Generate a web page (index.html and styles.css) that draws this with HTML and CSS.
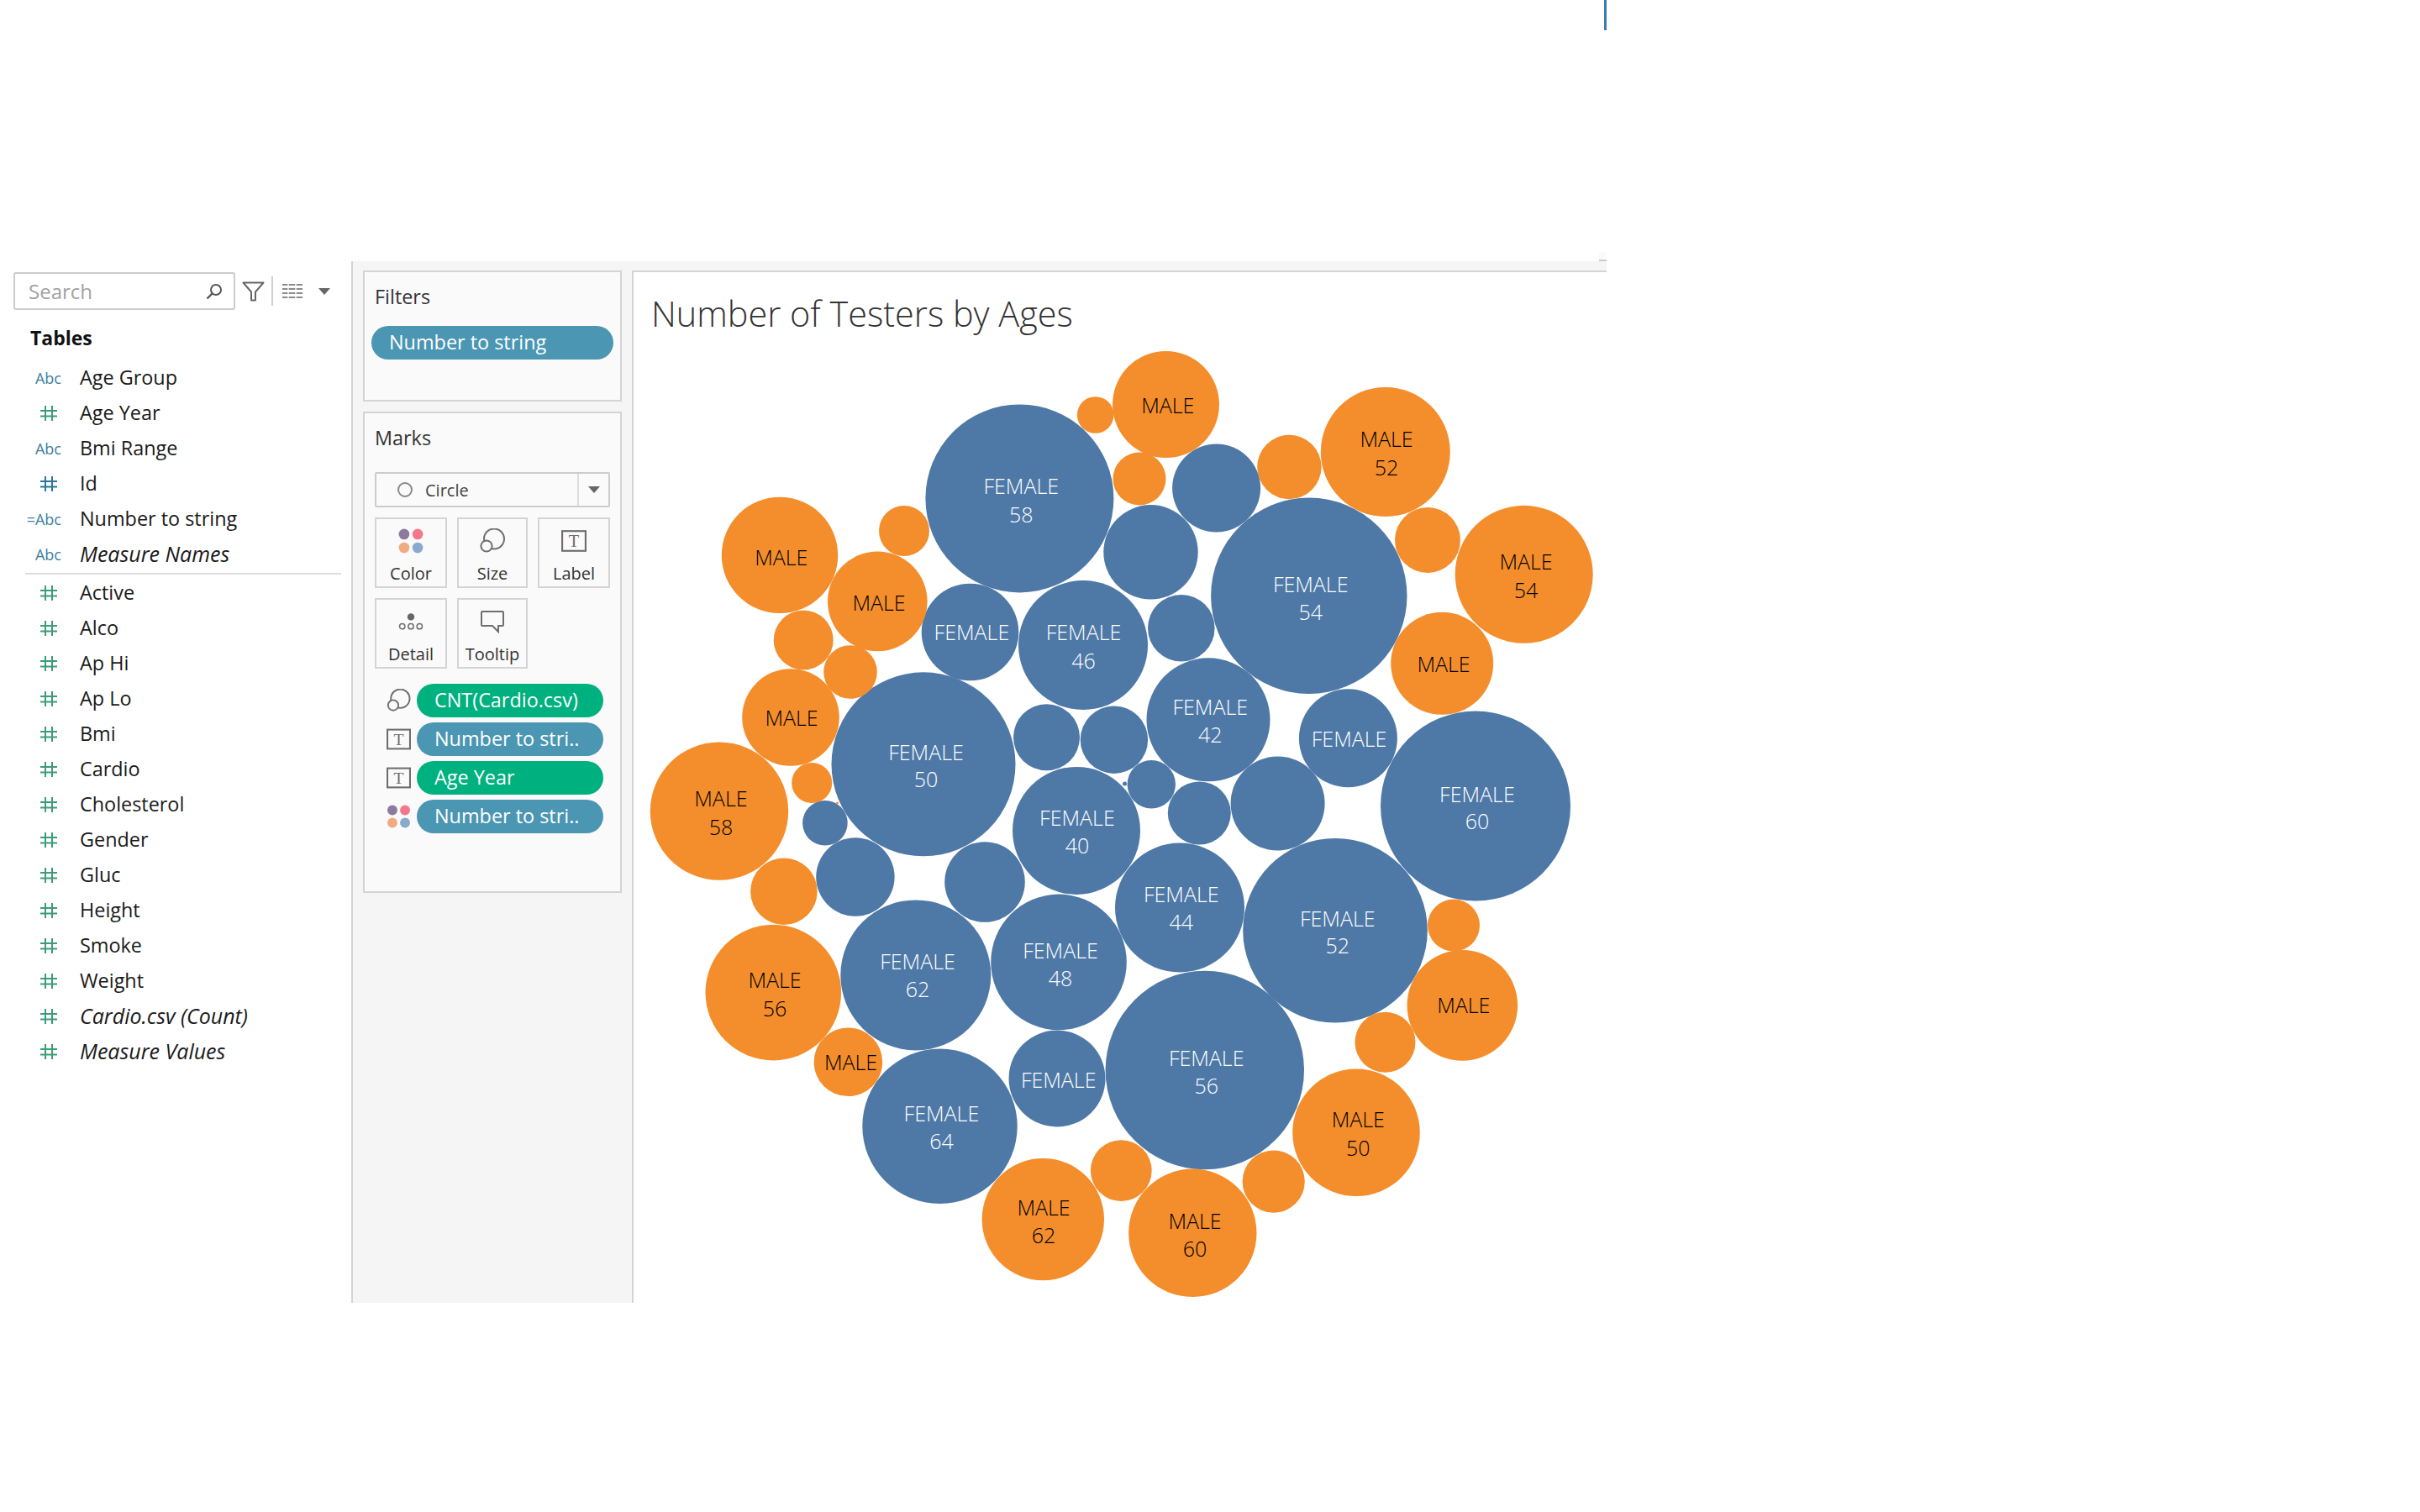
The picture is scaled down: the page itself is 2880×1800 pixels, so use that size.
FILE: index.html
```html
<!DOCTYPE html>
<html lang="en">
<head>
  <meta charset="UTF-8">
  <title>Number of Testers by Ages</title>
  <link rel="stylesheet" href="styles.css">
</head>
<body>
  <svg class="defs" aria-hidden="true">
    <symbol id="hash" viewBox="0 0 20 18">
      <path d="M6 0v18M14 0v18M0 6h20M0 12.5h20" fill="none" stroke="currentColor" stroke-width="2"/>
    </symbol>
    <symbol id="sizes" viewBox="0 0 30 30">
      <circle cx="17" cy="12.5" r="12" fill="none" stroke="#6e6e6e" stroke-width="2"/>
      <circle cx="8" cy="21" r="6.6" fill="#fafafa" stroke="#6e6e6e" stroke-width="2"/>
    </symbol>
    <symbol id="textbox" viewBox="0 0 28 24">
      <rect x="1" y="1" width="26" height="22" fill="none" stroke="#6e6e6e" stroke-width="2"/>
      <text x="14" y="18.5" class="serif-t">T</text>
    </symbol>
    <symbol id="dots" viewBox="0 0 26 26">
      <circle cx="6" cy="6" r="5.5" fill="#8c7aa0"/>
      <circle cx="20" cy="6" r="5.5" fill="#f5788a"/>
      <circle cx="6" cy="20" r="5.5" fill="#f1ab83"/>
      <circle cx="20" cy="20" r="5.5" fill="#88aacf"/>
    </symbol>
  </svg>

  <div class="tick"></div>

  <div class="workspace">
    <aside class="data-pane">
      <div class="search-row">
        <div class="search">
          <span>Search</span>
          <svg class="glass" viewBox="0 0 20 20"><circle cx="12" cy="8" r="6" fill="none" stroke="#555" stroke-width="2"/><path d="M7.5 12.5 1.5 18.5" stroke="#555" stroke-width="2.4"/></svg>
        </div>
        <svg class="funnel" viewBox="0 0 27 24"><path d="M1.5 1.5H25.5L16 12.5V22.5H11V12.5Z" fill="none" stroke="#666" stroke-width="2" stroke-linejoin="round"/></svg>
        <div class="sep"></div>
        <svg class="list-icon" viewBox="0 0 24 18"><path d="M0 1h24M0 6h24M0 11h24M0 16h24" stroke="#666" stroke-width="1.6" fill="none"/><path d="M7 0v18M16 0v18" stroke="#fff" stroke-width="1.4"/></svg>
        <div class="caret"></div>
      </div>
      <h3 class="tables">Tables</h3>

      <div class="field"><span class="type">Abc</span><span>Age Group</span></div>
      <div class="field"><svg class="hash green"><use href="#hash"/></svg><span>Age Year</span></div>
      <div class="field"><span class="type">Abc</span><span>Bmi Range</span></div>
      <div class="field"><svg class="hash blue"><use href="#hash"/></svg><span>Id</span></div>
      <div class="field"><span class="type calc">=Abc</span><span>Number to string</span></div>
      <div class="field"><span class="type">Abc</span><em>Measure Names</em></div>
      <div class="divider"></div>
      <div class="field"><svg class="hash green"><use href="#hash"/></svg><span>Active</span></div>
      <div class="field"><svg class="hash green"><use href="#hash"/></svg><span>Alco</span></div>
      <div class="field"><svg class="hash green"><use href="#hash"/></svg><span>Ap Hi</span></div>
      <div class="field"><svg class="hash green"><use href="#hash"/></svg><span>Ap Lo</span></div>
      <div class="field"><svg class="hash green"><use href="#hash"/></svg><span>Bmi</span></div>
      <div class="field"><svg class="hash green"><use href="#hash"/></svg><span>Cardio</span></div>
      <div class="field"><svg class="hash green"><use href="#hash"/></svg><span>Cholesterol</span></div>
      <div class="field"><svg class="hash green"><use href="#hash"/></svg><span>Gender</span></div>
      <div class="field"><svg class="hash green"><use href="#hash"/></svg><span>Gluc</span></div>
      <div class="field"><svg class="hash green"><use href="#hash"/></svg><span>Height</span></div>
      <div class="field"><svg class="hash green"><use href="#hash"/></svg><span>Smoke</span></div>
      <div class="field"><svg class="hash green"><use href="#hash"/></svg><span>Weight</span></div>
      <div class="field"><svg class="hash green"><use href="#hash"/></svg><em>Cardio.csv (Count)</em></div>
      <div class="field"><svg class="hash green"><use href="#hash"/></svg><em>Measure Values</em></div>
    </aside>

    <section class="shelves">
      <div class="card filters">
        <div class="card-title">Filters</div>
        <div class="pill pill-blue filter-pill">Number to string</div>
      </div>

      <div class="card marks">
        <div class="card-title">Marks</div>
        <div class="mark-select">
          <div class="mark-type"><span class="ring"></span>Circle</div>
          <div class="mark-arrow"><div class="caret"></div></div>
        </div>
        <div class="mark-buttons">
          <div class="mark-btn"><svg class="btn-icon"><use href="#dots"/></svg><span>Color</span></div>
          <div class="mark-btn"><svg class="btn-icon"><use href="#sizes"/></svg><span>Size</span></div>
          <div class="mark-btn"><svg class="btn-icon"><use href="#textbox"/></svg><span>Label</span></div>
          <div class="mark-btn">
            <svg class="btn-icon" viewBox="0 0 32 26"><circle cx="16" cy="7" r="4.5" fill="#666"/><circle cx="5" cy="19" r="3.4" fill="none" stroke="#6e6e6e" stroke-width="1.6"/><circle cx="16" cy="19" r="3.4" fill="none" stroke="#6e6e6e" stroke-width="1.6"/><circle cx="27" cy="19" r="3.4" fill="none" stroke="#6e6e6e" stroke-width="1.6"/></svg>
            <span>Detail</span>
          </div>
          <div class="mark-btn">
            <svg class="btn-icon" viewBox="0 0 30 28"><path d="M3 2H27a1 1 0 0 1 1 1V18a1 1 0 0 1-1 1H22V26L15 19H3a1 1 0 0 1-1-1V3a1 1 0 0 1 1-1Z" fill="none" stroke="#6e6e6e" stroke-width="2"/></svg>
            <span>Tooltip</span>
          </div>
        </div>
        <div class="mark-fields">
          <div class="mark-field"><svg class="field-icon"><use href="#sizes"/></svg><div class="pill pill-green">CNT(Cardio.csv)</div></div>
          <div class="mark-field"><svg class="field-icon"><use href="#textbox"/></svg><div class="pill pill-blue">Number to stri..</div></div>
          <div class="mark-field"><svg class="field-icon"><use href="#textbox"/></svg><div class="pill pill-green">Age Year</div></div>
          <div class="mark-field"><svg class="field-icon"><use href="#dots"/></svg><div class="pill pill-blue">Number to stri..</div></div>
        </div>
      </div>
    </section>

    <main class="view-wrap">
      <div class="corner"></div>
      <div class="view">
        <h1 class="view-title">Number of Testers by Ages</h1>
        <!-- bubbles: coordinates are page pixels, see viewBox -->
        <svg class="bubbles" viewBox="754 400 1158 1151">
          <g class="f">
            <circle cx="1213.4" cy="593.4" r="112"/>
            <circle cx="1447.6" cy="581" r="52.5"/>
            <circle cx="1369.5" cy="657.3" r="56.2"/>
            <circle cx="1557.8" cy="709.2" r="116.7"/>
            <circle cx="1154.5" cy="752.5" r="57.8"/>
            <circle cx="1289" cy="768" r="77"/>
            <circle cx="1405.8" cy="747.7" r="39.8"/>
            <circle cx="1099" cy="909.8" r="109.5"/>
            <circle cx="1245.5" cy="877.8" r="39.5"/>
            <circle cx="1325.9" cy="880.7" r="40.2"/>
            <circle cx="1438" cy="856.8" r="73.5"/>
            <circle cx="1604.4" cy="878.8" r="58.5"/>
            <circle cx="1756" cy="959.5" r="113"/>
            <circle cx="981.9" cy="979.7" r="26.8"/>
            <circle cx="1370.3" cy="933.8" r="28.7"/>
            <circle cx="1338.5" cy="933" r="2.5"/>
            <circle cx="1427.3" cy="968" r="37.5"/>
            <circle cx="1520.6" cy="956.5" r="56"/>
            <circle cx="1281" cy="988.9" r="76"/>
            <circle cx="1017.9" cy="1044" r="46.7"/>
            <circle cx="1172" cy="1050" r="47.8"/>
            <circle cx="1404" cy="1080.6" r="77"/>
            <circle cx="1589" cy="1107.7" r="109.8"/>
            <circle cx="1089.8" cy="1160.9" r="89.5"/>
            <circle cx="1260" cy="1145.4" r="80.8"/>
            <circle cx="1118.5" cy="1340.8" r="92.2"/>
            <circle cx="1258" cy="1284" r="57.5"/>
            <circle cx="1433.8" cy="1274" r="118.2"/>
          </g>
          <g class="m">
            <circle cx="1303.7" cy="494" r="21.8"/>
            <circle cx="1387.5" cy="481.5" r="63.5"/>
            <circle cx="1356" cy="570" r="31.5"/>
            <circle cx="1534.4" cy="556" r="38.2"/>
            <circle cx="1648.8" cy="538" r="77"/>
            <circle cx="1699" cy="643" r="39"/>
            <circle cx="1813.7" cy="683.8" r="82"/>
            <circle cx="1716.2" cy="789.8" r="61"/>
            <circle cx="928" cy="660.9" r="69.2"/>
            <circle cx="1076" cy="632" r="30"/>
            <circle cx="1044.3" cy="715.9" r="59.3"/>
            <circle cx="956.2" cy="762" r="35.5"/>
            <circle cx="1012" cy="800" r="31.8"/>
            <circle cx="941" cy="854" r="57.8"/>
            <circle cx="856" cy="965.6" r="82.2"/>
            <circle cx="966.2" cy="932" r="24"/>
            <circle cx="996.4" cy="956" r="1.5"/>
            <circle cx="932.9" cy="1061.2" r="39.8"/>
            <circle cx="1730" cy="1101.6" r="31"/>
            <circle cx="920.3" cy="1181.6" r="80.8"/>
            <circle cx="1740.3" cy="1196.9" r="65.8"/>
            <circle cx="1648.5" cy="1240.7" r="36"/>
            <circle cx="1009.4" cy="1264.3" r="40.8"/>
            <circle cx="1614" cy="1348.3" r="75.8"/>
            <circle cx="1334.3" cy="1393.6" r="36.4"/>
            <circle cx="1515.7" cy="1406.6" r="37.1"/>
            <circle cx="1241.3" cy="1451.6" r="72.7"/>
            <circle cx="1419.3" cy="1467.8" r="76.2"/>
          </g>
          <g class="label-f">
            <text x="1215.3" y="588">FEMALE</text><text x="1215.3" y="622">58</text>
            <text x="1559.7" y="705">FEMALE</text><text x="1559.7" y="738">54</text>
            <text x="1156.4" y="762.4">FEMALE</text>
            <text x="1289.5" y="762.4">FEMALE</text><text x="1289.5" y="796">46</text>
            <text x="1440.3" y="850.5">FEMALE</text><text x="1440.3" y="883.5">42</text>
            <text x="1605.6" y="888.7">FEMALE</text>
            <text x="1102" y="904.5">FEMALE</text><text x="1102" y="937">50</text>
            <text x="1757.9" y="954.7">FEMALE</text><text x="1757.9" y="987">60</text>
            <text x="1281.9" y="982.5">FEMALE</text><text x="1281.9" y="1015.5">40</text>
            <text x="1405.8" y="1074.4">FEMALE</text><text x="1405.8" y="1107">44</text>
            <text x="1591.8" y="1103">FEMALE</text><text x="1591.8" y="1135">52</text>
            <text x="1092" y="1154.4">FEMALE</text><text x="1092" y="1187">62</text>
            <text x="1262" y="1140.6">FEMALE</text><text x="1262" y="1174">48</text>
            <text x="1259.7" y="1294.5">FEMALE</text>
            <text x="1120.4" y="1334.7">FEMALE</text><text x="1120.4" y="1367.6">64</text>
            <text x="1435.7" y="1268.5">FEMALE</text><text x="1435.7" y="1301.8">56</text>
          </g>
          <g class="label-m">
            <text x="1389.8" y="492">MALE</text>
            <text x="1650" y="532">MALE</text><text x="1650" y="566">52</text>
            <text x="1816" y="678">MALE</text><text x="1816" y="712">54</text>
            <text x="1718" y="800">MALE</text>
            <text x="929.8" y="672.5">MALE</text>
            <text x="1046" y="726.6">MALE</text>
            <text x="942" y="864">MALE</text>
            <text x="857.9" y="960">MALE</text><text x="857.9" y="993.5">58</text>
            <text x="922" y="1176">MALE</text><text x="922" y="1209.5">56</text>
            <text x="1741.8" y="1206">MALE</text>
            <text x="1012.5" y="1274">MALE</text>
            <text x="1616.3" y="1342.3">MALE</text><text x="1616.3" y="1375.6">50</text>
            <text x="1242" y="1447">MALE</text><text x="1242" y="1480">62</text>
            <text x="1422" y="1462.5">MALE</text><text x="1422" y="1495.8">60</text>
          </g>
        </svg>
      </div>
    </main>
  </div>
</body>
</html>
```

FILE: styles.css
```css
body {
  margin: 0;
  background-color: #fff;
  font-family: "Open Sans", "Liberation Sans", sans-serif;
  font-size: 23.4px;
  color: #1a1a1a;
}
.defs {
  display: none;
}
.tick {
  width: 3px;
  height: 36px;
  margin-left: 1909px;
  background-color: #3a7db5;
}
.workspace {
  display: flex;
  width: 1912px;
  height: 1240px;
  margin-top: 275px;
}

/* data pane */
.data-pane {
  width: 418px;
  flex: none;
  box-sizing: border-box;
  padding-top: 13px;
}
.search-row {
  display: flex;
  align-items: center;
  height: 45px;
  padding-left: 16px;
}
.search {
  width: 264px;
  height: 45px;
  box-sizing: border-box;
  display: flex;
  align-items: center;
  justify-content: space-between;
  padding: 0 13px 0 16px;
  border: 2px solid #ccc;
  border-radius: 3px;
  font-size: 24px;
  color: #a2a2a2;
}
.glass {
  width: 20px;
  height: 20px;
}
.funnel {
  width: 27px;
  height: 24px;
  margin-left: 8px;
}
.sep {
  width: 2px;
  height: 35px;
  margin-left: 8px;
  background-color: #d0d0d0;
}
.list-icon {
  width: 24px;
  height: 18px;
  margin-left: 11px;
}
.caret {
  width: 0;
  height: 0;
  border-left: 7px solid transparent;
  border-right: 7px solid transparent;
  border-top: 8px solid #666;
}
.search-row .caret {
  margin-left: 19px;
}
.tables {
  margin: 18px 0 12px 36px;
  font-size: 23px;
  line-height: 30px;
  font-weight: 700;
  color: #111;
}
.field {
  display: flex;
  align-items: center;
  height: 42px;
}
.field > :last-child {
  margin-bottom: 2px;
}
.field em {
  font-size: 25px;
  font-style: italic;
}
.type {
  width: 95px;
  flex: none;
  box-sizing: border-box;
  padding-right: 22px;
  text-align: right;
  font-size: 18px;
  color: #3e7f9e;
}
.hash {
  width: 20px;
  height: 18px;
  flex: none;
  margin-left: 48px;
  margin-right: 27px;
}
.green {
  color: #3d9c78;
}
.blue {
  color: #2f7599;
}
.divider {
  height: 2px;
  margin: 1px 12px 1px 30px;
  background-color: #ddd;
}

/* shelves */
.shelves {
  width: 334px;
  flex: none;
  box-sizing: border-box;
  padding: 11px 12px 0;
  background-color: #f5f5f5;
  border-left: 2px solid #d4d4d4;
  display: flex;
  flex-direction: column;
  gap: 12px;
}
.card {
  box-sizing: border-box;
  background-color: #fafafa;
  border: 2px solid #d4d4d4;
}
.filters {
  height: 156px;
}
.marks {
  height: 573px;
  padding: 0 12px;
}
.card-title {
  padding: 13px 0 0 12px;
  line-height: 33px;
  color: #333;
}
.marks .card-title {
  padding-left: 0;
}
.pill {
  height: 40px;
  box-sizing: border-box;
  padding-left: 21px;
  border-radius: 20px;
  line-height: 38px;
  color: #fff;
  white-space: nowrap;
}
.pill-blue {
  background-color: #4b96b3;
}
.pill-green {
  background-color: #00b180;
}
.filter-pill {
  margin: 18px 8px 0;
}
.mark-select {
  display: flex;
  height: 42px;
  box-sizing: border-box;
  margin-top: 24px;
  border: 2px solid #ccc;
  border-radius: 2px;
  font-size: 20px;
  color: #444;
}
.mark-type {
  flex: 1;
  display: flex;
  align-items: center;
  padding-left: 25px;
  gap: 15px;
}
.ring {
  width: 18px;
  height: 18px;
  box-sizing: border-box;
  border: 2px solid #888;
  border-radius: 50%;
}
.mark-arrow {
  width: 35px;
  border-left: 2px solid #ddd;
  display: flex;
  align-items: center;
  justify-content: center;
}
.mark-buttons {
  display: grid;
  grid-template-columns: 86px 84px 86px;
  grid-auto-rows: 84px;
  gap: 12px;
  margin-top: 12px;
}
.mark-btn {
  box-sizing: border-box;
  border: 2px solid #d4d4d4;
  display: flex;
  flex-direction: column;
  align-items: center;
  font-size: 20px;
  line-height: 26px;
  color: #333;
}
.btn-icon {
  width: 30px;
  height: 30px;
  margin: 11px 0 11px;
}
.mark-fields {
  margin-top: 18px;
  display: flex;
  flex-direction: column;
  gap: 6px;
}
.mark-field {
  display: flex;
  align-items: center;
  padding-left: 14px;
  gap: 7px;
}
.mark-field .pill {
  width: 222px;
}
.field-icon {
  width: 29px;
  height: 28px;
  flex: none;
}
.serif-t {
  font-family: "Liberation Serif", serif;
  font-size: 19px;
  text-anchor: middle;
  fill: #6e6e6e;
}

/* view */
.view-wrap {
  flex: 1;
  position: relative;
  box-sizing: border-box;
  padding-top: 11px;
  background-color: #f5f5f5;
  display: flex;
}
.corner {
  position: absolute;
  top: -11px;
  right: 0;
  width: 9px;
  height: 11px;
  box-sizing: border-box;
  background-color: #fafafa;
  border-bottom: 2px solid #ccc;
}
.view {
  flex: 1;
  background-color: #fff;
  border-top: 2px solid #d4d4d4;
  border-left: 2px solid #d4d4d4;
  display: flex;
  flex-direction: column;
}
.view-title {
  height: 76px;
  margin: 0;
  padding-left: 21px;
  box-sizing: border-box;
  font-size: 41.4px;
  font-weight: 300;
  line-height: 98px;
  white-space: nowrap;
  color: #333;
}
.bubbles {
  width: 1158px;
  height: 1151px;
  display: block;
}
.f circle {
  fill: #4e79a7;
}
.m circle {
  fill: #f48e2c;
}
.label-f text,
.label-m text {
  font-size: 25px;
  font-weight: 300;
  text-anchor: middle;
}
.label-f text {
  fill: #fff;
}
.label-m text {
  fill: #000;
}
```
